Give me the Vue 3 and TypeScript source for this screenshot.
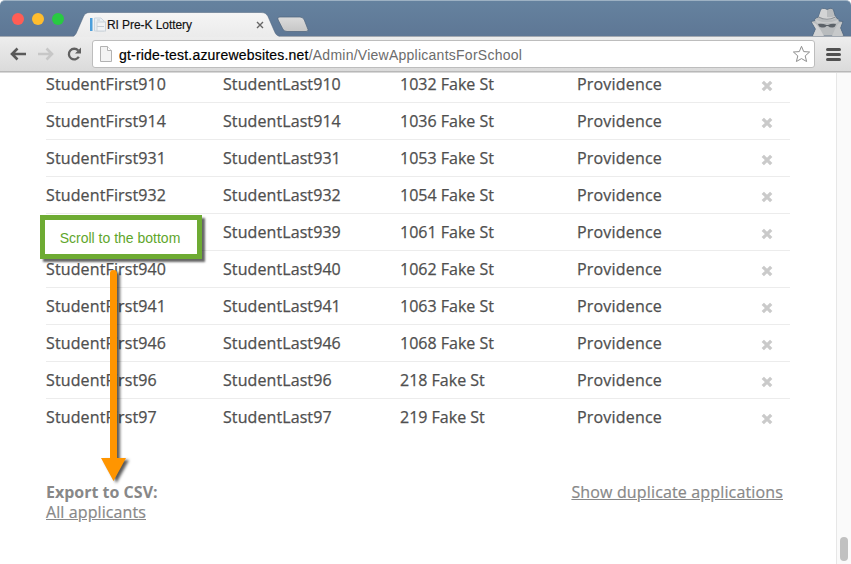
<script setup lang="ts">
interface Applicant {
  first: string
  last: string
  address: string
  city: string
}

const coveredId = '939'

const source: [string, string][] = [
  ['910', '1032'],
  ['914', '1036'],
  ['931', '1053'],
  ['932', '1054'],
  ['939', '1061'],
  ['940', '1062'],
  ['941', '1063'],
  ['946', '1068'],
  ['96', '218'],
  ['97', '219'],
]

const applicants: Applicant[] = source.map(([id, street]) => ({
  first: id === coveredId ? '' : `StudentFirst${id}`,
  last: `StudentLast${id}`,
  address: `${street} Fake St`,
  city: 'Providence',
}))
</script>

<template>
  <div class="browser">
    <header class="tabstrip">
      <div class="lights">
        <span class="light red"></span>
        <span class="light yellow"></span>
        <span class="light green"></span>
      </div>
      <div class="tab">
        <svg class="tab-shape" width="208" height="25" viewBox="0 0 208 25">
          <defs>
            <linearGradient id="tabFill" x1="0" y1="0" x2="0" y2="1">
              <stop offset="0" stop-color="#f5f5f5" />
              <stop offset="1" stop-color="#ebebeb" />
            </linearGradient>
          </defs>
          <path d="M0 24.500C2 23.500 3 22 4 19.500L10.500 4.500C12 1.500 13.500 .5 17 .5H188C192 .5 193.500 2 195 4.500L201.500 19.500C202.500 22 204 24 207 24.500V25H0Z" fill="url(#tabFill)" />
          <path d="M0 24.500C2 23.500 3 22 4 19.500L10.500 4.500C12 1.500 13.500 .5 17 .5H188C192 .5 193.500 2 195 4.500L201.500 19.500C202.500 22 204 24 207 24.500" fill="none" stroke="#4c617b" stroke-opacity=".5" />
        </svg>
        <svg class="favicon" width="17" height="16" viewBox="0 0 17 16">
          <rect x="0" y="1" width="2.500" height="13" fill="#4b9fdc" />
          <path d="M4.500 1H11L14 4V14H4.500Z" fill="#e8eef3" stroke="#cbd5de" />
          <rect x="7" y="5" width="8.500" height="9" fill="#f1f3f5" stroke="#cbd3da" />
          <path d="M7 9.500H14M7 3H10" stroke="#c3ccd5" />
        </svg>
        <span class="tab-title">RI Pre-K Lottery</span>
        <svg class="tab-close" width="8" height="8" viewBox="0 0 8 8">
          <path d="M1 1L7 7M7 1L1 7" stroke="#666" stroke-width="1.400" />
        </svg>
      </div>
      <svg class="new-tab" width="32" height="17" viewBox="0 0 32 17">
        <defs>
          <linearGradient id="newTabFill" x1="0" y1="0" x2="0" y2="1">
            <stop offset="0" stop-color="#dcdcdc" />
            <stop offset="1" stop-color="#c6c6c6" />
          </linearGradient>
        </defs>
        <path d="M3 1H23Q26 1 27.300 4L31 13.500Q31.500 15.500 29 15.500H10Q7 15.500 5.800 13L1.200 4Q0 1 3 1Z" fill="url(#newTabFill)" stroke="#52677f" stroke-opacity=".75" />
      </svg>
      <svg class="incognito" width="36" height="29" viewBox="0 0 36 29">
        <path d="M8.500 10L11 2.500Q12 .8 14.500 1.500L17 2.500L20 1.300Q22.500 .8 23.500 3L25.500 10Q29 12 29 14L33 14.500L30.500 21L34 29H2.500L5.500 22L1 14.500L5 13.500Q3.500 11.500 8.500 10Z" fill="#b9bcbe" stroke="#51677f" stroke-width=".8" />
        <path d="M8.500 10.500L11 3Q12 1.500 14.500 2L17 3V10Q21 11 25 9L26 11Q18 15 8.500 10.500Z" fill="#d3d4d5" />
        <path d="M8.500 10Q17 14.500 25.500 10" fill="none" stroke="#8c9195" stroke-width="1.100" />
        <path d="M5 12.500Q17 18 29 12.500L27 16H7Z" fill="#c9cbcc" />
        <path d="M8 17Q12 16 16.500 18H18Q22 16 26 17Q25 21 22 20.500Q19.500 20.500 18 19H16.500Q15 21 12 20.500Q9 20.500 8 17Z" fill="#5c6268" />
        <path d="M2 15L6 17L10 22L14 29H3L6 22Z" fill="#d2d3d4" />
        <path d="M32 15L28 17L25 22L22 29H33L30 21Z" fill="#c7c9ca" />
      </svg>
    </header>

    <div class="toolbar">
      <svg class="nav" width="17" height="14" viewBox="0 0 17 14">
        <path d="M7.500 1.500L2 7L7.500 12.500M2.500 7H16" fill="none" stroke="#5a5a5a" stroke-width="2.600" />
      </svg>
      <svg class="nav forward" width="17" height="14" viewBox="0 0 17 14">
        <path d="M9.500 1.500L15 7L9.500 12.500M14.500 7H1" fill="none" stroke="#c7c7c7" stroke-width="2.600" />
      </svg>
      <svg class="reload" width="15" height="14" viewBox="0 0 15 14">
        <path d="M11.800 9.700A5.300 5.300 0 1 1 11.200 3.600" fill="none" stroke="#606060" stroke-width="2.300" />
        <path d="M14 .5V6.500H8Z" fill="#606060" />
      </svg>
      <div class="omnibox">
        <svg class="page-icon" width="12" height="16" viewBox="0 0 12 16">
          <path d="M.5 .5H7.500L11.500 4.500V15.500H.5Z" fill="#f3f3f3" stroke="#b2b2b2" />
          <path d="M7.500 .5V4.500H11.500" fill="#fff" stroke="#b2b2b2" />
        </svg>
        <span class="url"><span class="host">gt-ride-test.azurewebsites.net</span><span class="path">/Admin/ViewApplicantsForSchool</span></span>
        <svg class="star" width="19" height="18" viewBox="0 0 19 18">
          <path d="M9.500 1.300L11.700 6.600L17.600 7L13.200 10.900L14.600 16.500L9.500 13.600L4.400 16.500L5.800 10.900L1.400 7L7.300 6.600Z" fill="#fff" stroke="#8f8f8f" stroke-linejoin="round" />
        </svg>
      </div>
      <div class="menu"><i></i><i></i><i></i></div>
    </div>

    <div class="viewport">
      <main class="page">
        <div class="table">
          <div v-for="a in applicants" :key="a.last" class="row">
            <span class="first">{{ a.first }}</span>
            <span class="last">{{ a.last }}</span>
            <span>{{ a.address }}</span>
            <span class="city">{{ a.city }}</span>
            <svg class="remove" width="12" height="12" viewBox="0 0 12 12">
              <path d="M1.800 1.800L10.200 10.200M10.200 1.800L1.800 10.200" stroke="#cacaca" stroke-width="3.300" />
            </svg>
          </div>
        </div>
        <footer class="footer">
          <div>
            <div class="export-title">Export to CSV:</div>
            <a class="link all">All applicants</a>
          </div>
          <a class="link duplicates">Show duplicate applications</a>
        </footer>
      </main>
      <div class="scrollbar"><div class="thumb"></div></div>
    </div>

    <div class="callout">Scroll to the bottom</div>
    <svg class="arrow" width="40" height="222" viewBox="0 0 40 222">
      <path d="M11 8Q11 5 14.500 5Q18 5 18 8V193H27L14.500 216L2 193H11Z" fill="#ff9500" />
    </svg>
  </div>
</template>

<style>
body {
  margin: 0;
  background: #fff;
}
</style>

<style scoped>
.browser {
  position: relative;
  width: 851px;
  height: 564px;
  display: flex;
  flex-direction: column;
  overflow: hidden;
  background: #fff;
  font-family: "Open Sans", "Noto Sans", sans-serif;
}
.tabstrip {
  height: 37px;
  box-sizing: border-box;
  display: flex;
  align-items: flex-end;
  flex: none;
  border-top: 1px solid #9db1c3;
  border-bottom: 1px solid #a3a9b1;
  border-radius: 5px 5px 0 0;
  background: linear-gradient(#65829f, #5e7795);
}
.lights {
  width: 73px;
  height: 35px;
  box-sizing: border-box;
  padding: 12px 0 0 12px;
  display: flex;
  gap: 8px;
}
.light {
  width: 12px;
  height: 12px;
  border-radius: 50%;
}
.red { background: #ff5d55; }
.yellow { background: #ffbd2e; }
.green { background: #28ca42; }
.tab {
  position: relative;
  width: 207px;
  height: 25px;
  margin: 0 0 -1px;
  box-sizing: border-box;
  padding: 0 16px 0 17px;
  display: flex;
  align-items: center;
  font: 12px/16px "Liberation Sans", Arial, sans-serif;
  color: #111;
}
.tab-shape {
  position: absolute;
  left: 0;
  top: 0;
}
.favicon, .tab-title, .tab-close {
  position: relative;
}
.tab-title {
  flex: 1;
  letter-spacing: -0.07px;
  -webkit-text-stroke: 0.15px #111;
}
.new-tab {
  margin: 0 0 3px -3px;
}
.incognito {
  margin: 0 5px 0 auto;
}
.toolbar {
  height: 36px;
  box-sizing: border-box;
  flex: none;
  display: flex;
  align-items: center;
  padding: 0 10px 1px;
  border-bottom: 1px solid #d8d8d8;
  box-shadow: inset 0 -1px #b8b8b8;
  background: linear-gradient(#ededed, #dadada);
}
.forward {
  margin-left: 10px;
}
.reload {
  margin-left: 13px;
}
.omnibox {
  width: 723px;
  height: 28px;
  margin-left: 10px;
  box-sizing: border-box;
  display: flex;
  align-items: center;
  padding: 0 3px 0 7px;
  border: 1px solid #bdbdbd;
  border-radius: 3px;
  background: #fff;
}
.url {
  flex: 1;
  margin: 1px 0 0 7px;
  white-space: nowrap;
  font: 14px/18px "Liberation Sans", Arial, sans-serif;
}
.host {
  color: #000;
  letter-spacing: 0.2px;
  -webkit-text-stroke: 0.2px #000;
}
.path {
  color: #6c6c6c;
  letter-spacing: 0.25px;
}
.menu {
  width: 15px;
  margin-left: 11px;
  display: flex;
  flex-direction: column;
  gap: 2px;
}
.menu i {
  height: 3px;
  border-radius: 1.5px;
  background: #505050;
}
.viewport {
  flex: 1;
  min-height: 0;
  display: flex;
  overflow: hidden;
}
.page {
  flex: 1;
  padding: 0 45px 0 46px;
}
.table {
  width: 744px;
  margin-top: -7px;
}
.row {
  height: 37px;
  box-sizing: border-box;
  display: grid;
  grid-template-columns: repeat(4, 177px) 1fr;
  align-items: center;
  border-bottom: 1px solid #ececec;
  color: #4f4f4f;
  font-size: 16px;
  line-height: 24px;
  -webkit-text-stroke: 0.25px #4f4f4f;
}
.row:last-child {
  border-bottom-color: transparent;
}
.first { letter-spacing: 0.13px; }
.last { letter-spacing: 0.09px; }
.city { letter-spacing: 0.19px; }
.remove {
  margin: 3px 0 0 7px;
}
.footer {
  width: 737px;
  margin-top: 46px;
  display: flex;
  justify-content: space-between;
  align-items: flex-start;
  color: #888;
  font-size: 16px;
  line-height: 20px;
}
.export-title {
  font-weight: 700;
}
.link {
  text-decoration: underline;
  -webkit-text-stroke: 0.2px #888;
}
.all { letter-spacing: 0.1px; }
.duplicates { letter-spacing: 0.15px; }
.scrollbar {
  width: 15px;
  box-sizing: border-box;
  display: flex;
  align-items: flex-end;
  justify-content: center;
  padding-bottom: 3px;
  border-left: 1px solid #e7e7e7;
  background: #fafafa;
}
.thumb {
  width: 8px;
  height: 24px;
  border-radius: 4px;
  background: #c1c1c1;
}
.callout {
  position: absolute;
  left: 40px;
  top: 215px;
  width: 162px;
  height: 44px;
  box-sizing: border-box;
  display: flex;
  align-items: center;
  justify-content: center;
  padding: 2px 2px 0 0;
  border: 5px solid #6eab33;
  background: #fff;
  box-shadow: 3px 3px 2px rgba(0, 0, 0, 0.6);
  color: #5fa62c;
  font: 14px/18px "Liberation Sans", Arial, sans-serif;
  white-space: nowrap;
}
.arrow {
  position: absolute;
  left: 99px;
  top: 265px;
  filter: drop-shadow(3px 2px 1.5px rgba(0, 0, 0, 0.65));
}
</style>
